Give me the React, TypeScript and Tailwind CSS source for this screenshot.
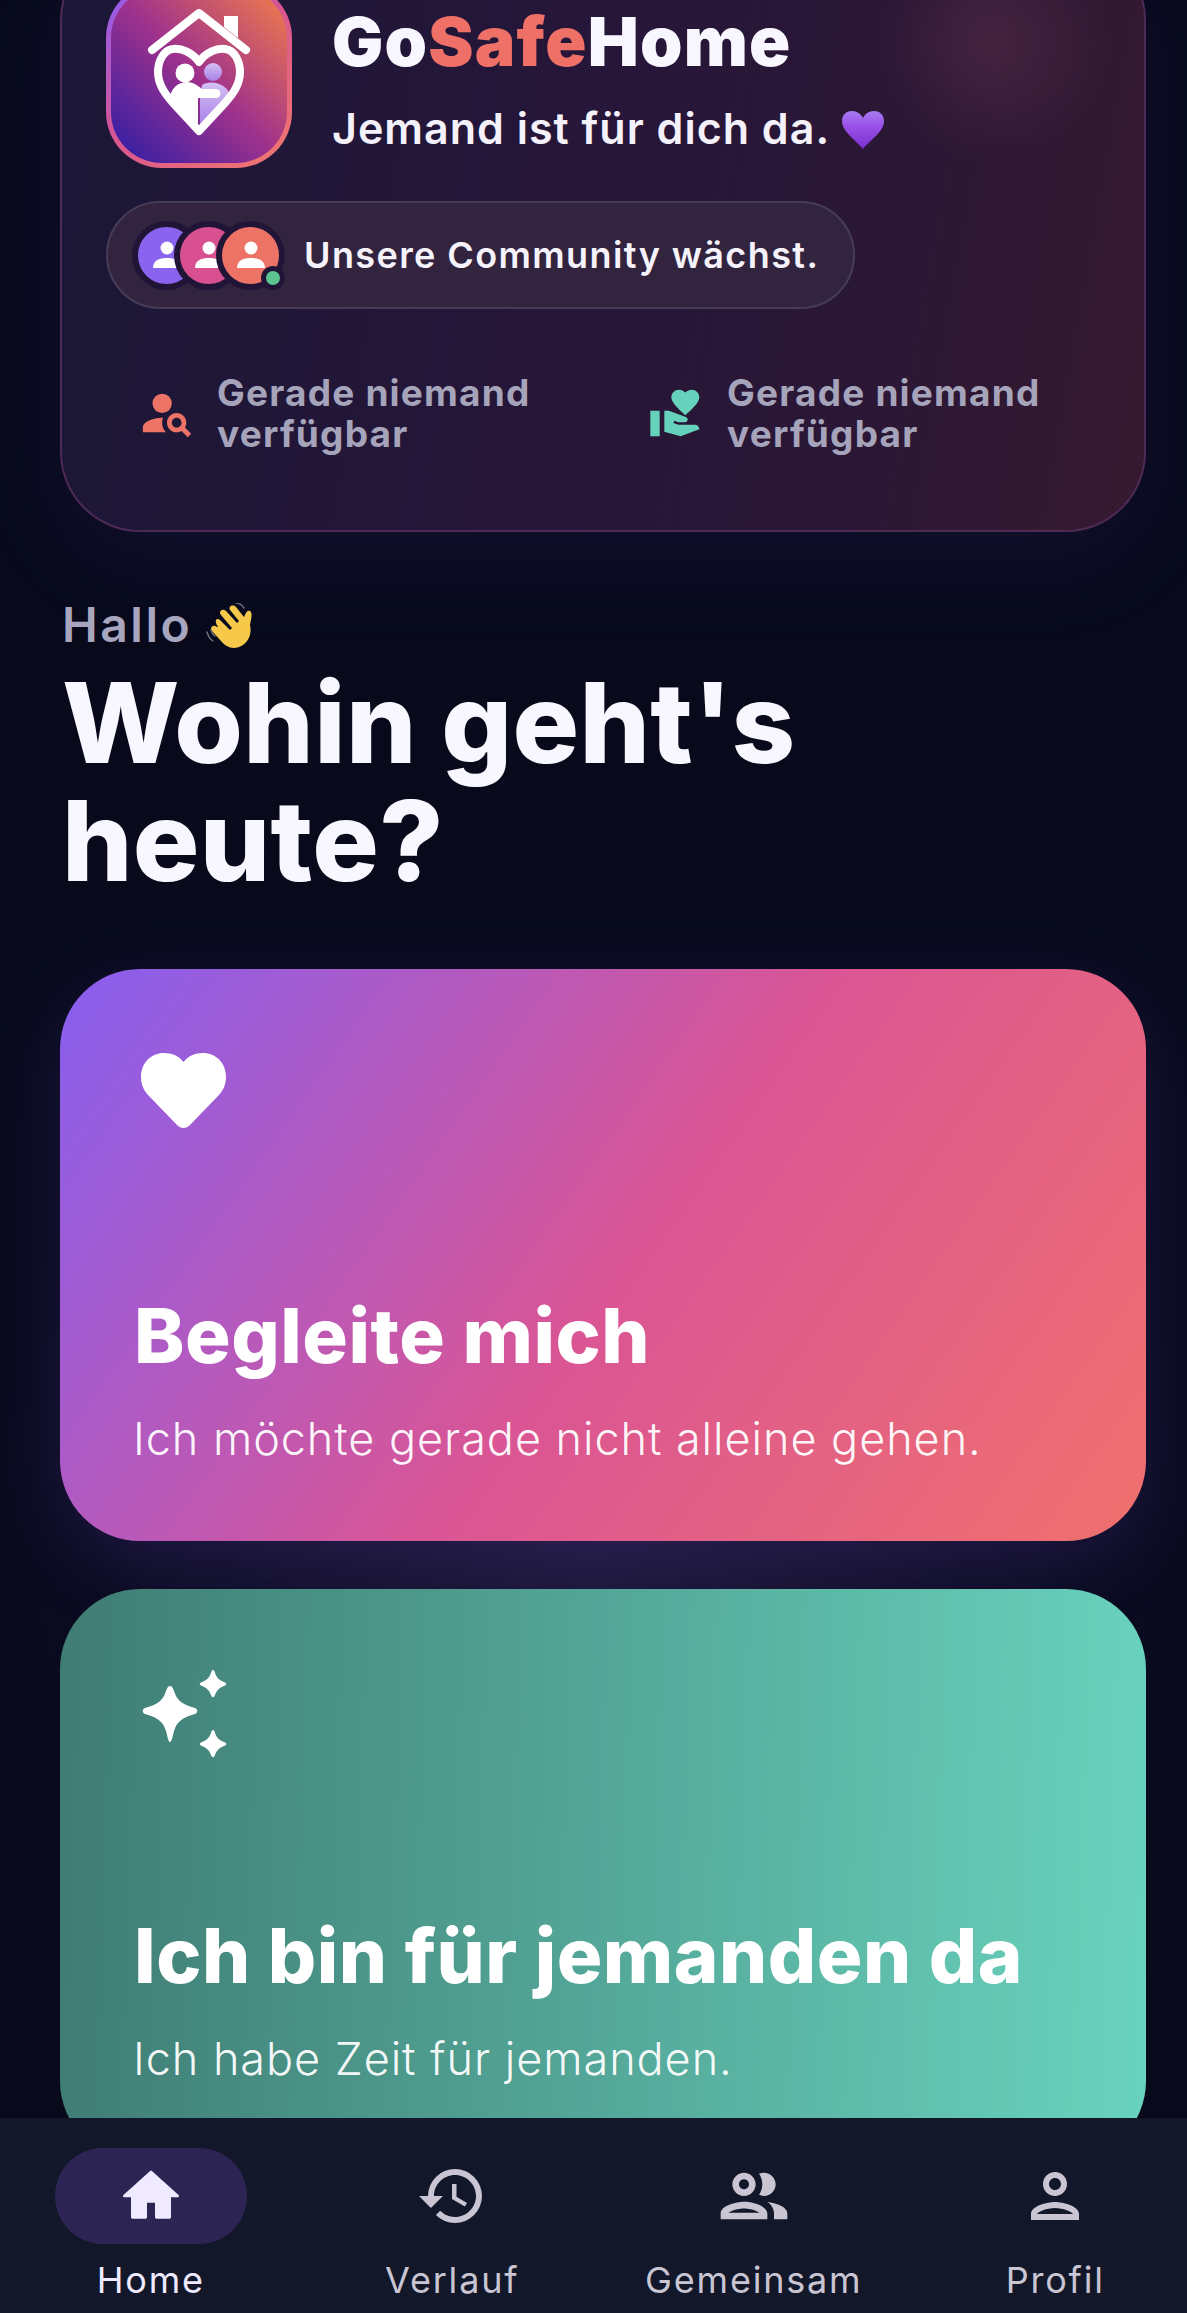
import { MdHistory, MdOutlinePeople, MdOutlinePerson, MdPersonSearch, MdVolunteerActivism } from 'react-icons/md';

function Logo() {
  return (
    <svg viewBox="105 -18 186 186" className="w-[186px] h-[186px] shrink-0">
      <defs>
        <linearGradient id="logoBorder" x1="0" y1="0" x2="0.8" y2="1">
          <stop offset="0" stopColor="#8b5cf6" />
          <stop offset="0.55" stopColor="#d9558f" />
          <stop offset="1" stopColor="#ee7373" />
        </linearGradient>
        <linearGradient id="logoFill" x1="0" y1="1" x2="1" y2="0">
          <stop offset="0" stopColor="#2a1ca6" />
          <stop offset="0.5" stopColor="#a0328c" />
          <stop offset="1" stopColor="#f58046" />
        </linearGradient>
        <linearGradient id="logoBuddy" x1="0" y1="0" x2="0" y2="1">
          <stop offset="0" stopColor="#d4c0f5" />
          <stop offset="1" stopColor="#a77fe6" />
        </linearGradient>
      </defs>
      <rect x="105" y="-18" width="186" height="186" rx="56" fill="url(#logoBorder)" />
      <rect x="110" y="-13" width="176" height="176" rx="51" fill="url(#logoFill)" />
      <path d="M151 50 L198 13 L245 50" fill="none" stroke="#fff" strokeWidth="8" strokeLinecap="round" strokeLinejoin="round" />
      <path d="M223 16 H237 V38 L223 27 Z" fill="#fff" />
      <circle cx="212" cy="72" r="9" fill="url(#logoBuddy)" />
      <path d="M201 85 C206 81 222 80 229 94 L199 127 V98 Z" fill="url(#logoBuddy)" />
      <circle cx="184" cy="73" r="9.5" fill="#fff" />
      <path d="M168 100 C170 88 177 82 186 82 C193 82 197 86 201 89 L215 89 A4.5 4.5 0 0 1 215 98 L197 98 V124 Z" fill="#fff" />
      <path
        d="M198 62 C191 52 180 48 172 49 C162 50 157 62 157 72 C157 86 166 96 173 104 L198 131 L223 104 C230 96 239 86 239 72 C239 62 234 50 224 49 C216 48 205 52 198 62 Z"
        fill="none"
        stroke="#fff"
        strokeWidth="8"
        strokeLinejoin="round"
      />
    </svg>
  );
}

function PurpleHeart() {
  return (
    <svg viewBox="0 0 42 38" className="w-[42px] h-[38px] inline-block ml-[12px] align-[-5px]">
      <defs>
        <linearGradient id="purpleHeart" x1="0" y1="0" x2="0" y2="1">
          <stop offset="0" stopColor="#a77cf0" />
          <stop offset="0.4" stopColor="#9a50e8" />
          <stop offset="1" stopColor="#7a2fd0" />
        </linearGradient>
      </defs>
      <path d="M21 38 C14 29 0 21 0 10 C0 3 5 0 10 0 C15 0 19 3 21 7 C23 3 27 0 32 0 C37 0 42 3 42 10 C42 21 28 29 21 38 Z" fill="url(#purpleHeart)" />
    </svg>
  );
}

function WavingHand() {
  return (
    <svg viewBox="0 0 48 48" className="w-[48px] h-[48px] inline-block ml-[14px] align-[-9px]">
      <path
        d="M12 24 C8 18 10 14 14 17 L24 27 L26 25 L15 12 C12 8 17 5 20 8 L31 20 L33 18 L24 7 C22 3 27 1 30 4 L38 14 C40 10 41 7 44 8 C47 10 45 16 44 22 C46 30 43 38 37 42 C28 48 20 44 15 38 L6 28 C3 24 8 21 11 24 Z"
        fill="#f6c94a"
      />
      <path d="M1 29 C2 33 4 36 7 38 M5 27 C6 30 7 32 9 33 M30 0 C33 0 36 2 38 5" fill="none" stroke="#6d6d7c" strokeWidth="1.5" strokeLinecap="round" />
    </svg>
  );
}

function Avatar({ bg }: { bg: string }) {
  return (
    <div className={`w-[69px] h-[69px] rounded-full border-[6px] border-[#211537] flex items-center justify-center ${bg} -ml-[27px] first:ml-0`}>
      <svg viewBox="0 0 30 30" className="w-[30px] h-[30px] fill-white">
        <circle cx="15" cy="8" r="6.5" />
        <path d="M1 28 C1 20 8 18 15 18 C22 18 29 20 29 28 Z" />
      </svg>
    </div>
  );
}

function Status({ icon, className }: { icon: React.ReactNode; className: string }) {
  return (
    <div className={`flex items-center ${className}`}>
      {icon}
      <p className="text-[37px] leading-[41px] font-bold tracking-[1.2px] text-[#a6a4bb]">
        Gerade niemand
        <br />
        verfügbar
      </p>
    </div>
  );
}

function ActionCard({ icon, title, text, bg }: { icon: React.ReactNode; title: string; text: string; bg: string }) {
  return (
    <div className={`h-[572px] rounded-[80px] pl-[74px] pt-[84px] flex flex-col ${bg}`}>
      <div className="h-[110px]">{icon}</div>
      <h2 className="mt-[127px] text-[76px] leading-[90px] font-extrabold tracking-[0.5px] text-white">{title}</h2>
      <p className="mt-[32px] -ml-[1px] text-[45px] leading-[54px] font-light tracking-[0.95px] text-white/95">{text}</p>
    </div>
  );
}

function NavItem({ icon, label, active }: { icon: React.ReactNode; label: string; active?: boolean }) {
  return (
    <div className="flex flex-col items-center">
      <div className={`w-full h-[96px] rounded-[48px] flex items-center justify-center ${active ? 'bg-[#2c2554] text-[#efeaff]' : 'text-[#c9c5d3]'}`}>
        {icon}
      </div>
      <span className={`mt-[16px] text-[36px] leading-[40px] tracking-[1.8px] whitespace-nowrap ${active ? 'text-[#efeaff]' : 'text-[#c9c5d3]'}`}>
        {label}
      </span>
    </div>
  );
}

export default function App() {
  return (
    <div className="relative h-[2313px] overflow-hidden bg-[#080a1c] font-['Inter',sans-serif]">
      <div className="absolute inset-0 bg-[radial-gradient(ellipse_700px_500px_at_50%_1565px,#1c1738_0%,#0a0b20_70%,transparent_100%)]" />
      <div className="relative">
        <header className="ml-[60px] mr-[41px] -mt-[60px] h-[592px] rounded-[80px] border-2 border-[#4e2a56] px-[44px] pt-[40px] bg-[radial-gradient(circle_120px_at_86%_17%,#44233f_0%,transparent_100%),linear-gradient(100deg,#1b1736_0%,#271639_50%,#2b1735_75%,#361a30_100%)] shadow-[0_30px_90px_rgba(100,70,200,0.1)]">
          <div className="flex items-start gap-[40px]">
            <Logo />
            <div className="pt-[21px]">
              <h1 className="text-[68px] leading-[76px] font-black text-[#f8f6ff] tracking-[1.2px]">
                Go<span className="text-[#ee7066]">Safe</span>Home
              </h1>
              <p className="mt-[24px] text-[43px] leading-[50px] font-semibold tracking-[1px] text-[#f4f1fb]">
                Jemand ist für dich da.
                <PurpleHeart />
              </p>
            </div>
          </div>
          <div className="mt-[33px] w-[749px] h-[108px] rounded-full border-2 border-[#463c56] bg-[#32243f] flex items-center pl-[24px]">
            <div className="relative flex">
              <Avatar bg="bg-[#8a64ee]" />
              <Avatar bg="bg-[#d8508f]" />
              <Avatar bg="bg-[#ee7367]" />
              <div className="absolute right-0 bottom-0 w-[24px] h-[24px] rounded-full border-[5px] border-[#211537] bg-[#5cc490]" />
            </div>
            <span className="ml-[19px] text-[36px] font-semibold tracking-[1.4px] text-[#f6f3fc] whitespace-nowrap">
              Unsere Community wächst.
            </span>
          </div>
          <div className="mt-[63px] pl-[32px] flex">
            <Status
              className="w-[507px]"
              icon={
                <div className="w-[79px] shrink-0">
                  <MdPersonSearch className="w-[58px] h-[58px] text-[#ee7367]" />
                </div>
              }
            />
            <Status
              className=""
              icon={
                <div className="w-[82px] shrink-0 pl-[3px]">
                  <MdVolunteerActivism className="w-[56px] h-[56px] text-[#67d2bb]" />
                </div>
              }
            />
          </div>
        </header>

        <section className="ml-[60px] mr-[41px] mt-[62px]">
          <p className="pl-[2px] text-[48px] leading-[62px] font-semibold tracking-[2.5px] text-[#a8a6bf]">
            Hallo
            <WavingHand />
          </p>
          <h2 className="mt-[8px] pl-[2px] w-[900px] text-[111px] leading-[118px] font-extrabold tracking-[0.3px] text-[#f8f6ff]">
            Wohin geht's heute?
          </h2>
        </section>

        <div className="ml-[60px] mr-[41px] mt-[69px] flex flex-col gap-[48px]">
          <ActionCard
            title="Begleite mich"
            text="Ich möchte gerade nicht alleine gehen."
            bg="bg-[linear-gradient(125deg,#875ff0_0%,#da5594_52%,#f0716d_100%)] shadow-[0_24px_80px_rgba(130,90,240,0.16)]"
            icon={
              <svg viewBox="0 0 85 75" className="w-[85px] h-[75px] ml-[7px] fill-white">
                <path d="M42.5 75 C40 75 38 74 36 72 L9 44 C2 37 0 31 0 24 C0 10 10 0 23 0 C31 0 38 3 42.5 9 C47 3 54 0 62 0 C75 0 85 10 85 24 C85 31 83 37 76 44 L49 72 C47 74 45 75 42.5 75 Z" />
              </svg>
            }
          />
          <ActionCard
            title="Ich bin für jemanden da"
            text="Ich habe Zeit für jemanden."
            bg="bg-[linear-gradient(92deg,#3f7c74_0%,#69d3bd_100%)]"
            icon={
              <svg viewBox="0 0 85 88" className="w-[85px] h-[88px] ml-[8px] -mt-[3px] fill-white">
                <path d="M28 16 C30 16 31 18 32 21 C35 30 39 34 53 38 C56 39 56 43 53 44 C39 48 35 52 32 61 C31 64 30 72 28 72 C26 72 25 64 24 61 C21 52 17 48 3 44 C0 43 0 39 3 38 C17 34 21 30 24 21 C25 18 26 16 28 16 Z" />
                <path d="M71 0 C72 0 73 2 73 3 C75 8 77 10 82 12 C85 13 85 15 82 16 C77 18 75 20 73 25 C72 28 70 28 69 25 C67 20 65 18 60 16 C57 15 57 13 60 12 C65 10 67 8 69 3 C69 2 70 0 71 0 Z" />
                <path d="M71 60 C72 60 73 62 73 63 C75 68 77 70 82 72 C85 73 85 75 82 76 C77 78 75 80 73 85 C72 88 70 88 69 85 C67 80 65 78 60 76 C57 75 57 73 60 72 C65 70 67 68 69 63 C69 62 70 60 71 60 Z" />
              </svg>
            }
          />
        </div>
      </div>

      <nav className="absolute inset-x-0 bottom-0 h-[195px] bg-[#12172a] pt-[30px] pl-[55px] pr-[36px] grid grid-cols-4 gap-[110px] items-start">
        <NavItem
          active
          label="Home"
          icon={
            <svg viewBox="0 0 24 24" className="w-[64px] h-[64px] fill-current">
              <path d="M10 20v-6h4v6h5v-8h3L12 3 2 12h3v8z" stroke="currentColor" strokeWidth="1" strokeLinejoin="round" />
            </svg>
          }
        />
        <NavItem label="Verlauf" icon={<MdHistory className="w-[72px] h-[72px]" />} />
        <NavItem label="Gemeinsam" icon={<MdOutlinePeople className="w-[80px] h-[80px]" />} />
        <NavItem label="Profil" icon={<MdOutlinePerson className="w-[72px] h-[72px]" />} />
      </nav>
    </div>
  );
}
